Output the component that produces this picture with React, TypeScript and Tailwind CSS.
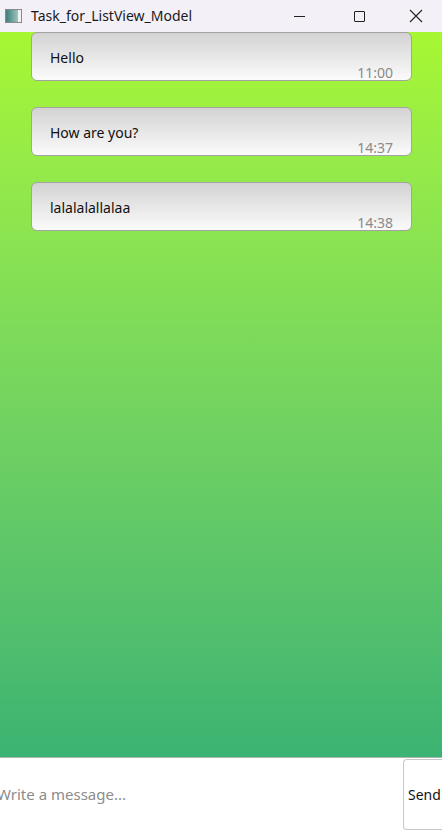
import React from "react";

const msgs = [
  { text: "Hello", time: "11:00" },
  { text: "How are you?", time: "14:37" },
  { text: "lalalalallalaa", time: "14:38" },
];

export default function App() {
  return (
    <div
      className="w-[442px] h-[830px] flex flex-col overflow-hidden bg-white"
      style={{ fontFamily: '"Noto Sans", "Open Sans", sans-serif' }}
    >
      {/* title bar */}
      <div className="h-[32px] shrink-0 bg-[#f3f0f8] flex items-center">
        <div className="ml-[5px] w-[17px] h-[14px] border border-[#8a8a8a] bg-gradient-to-r from-[#3d7f7a] to-[#b8d4d0] flex justify-end">
          <div className="w-[3px] h-full bg-[#f2f2f2]" />
        </div>
        <span className="ml-[9px] text-[14px] text-[#1a1a1a] leading-none">Task_for_ListView_Model</span>
        <div className="ml-auto flex items-center h-full">
          <div className="w-[46px] h-full flex items-center justify-center pr-[4px]">
            <div className="w-[11px] h-[1px] bg-[#222]" />
          </div>
          <div className="w-[70px] h-full flex items-center justify-center">
            <div className="w-[11px] h-[11px] border border-[#222] rounded-[1px]" />
          </div>
          <div className="w-[48px] h-full flex items-center justify-center pr-[4px]">
            <svg width="14" height="14" viewBox="0 0 14 14">
              <path d="M1 1 L13 13 M13 1 L1 13" stroke="#222" strokeWidth="1.1" />
            </svg>
          </div>
        </div>
      </div>

      {/* list */}
      <div className="flex-1 bg-gradient-to-b from-[#a7f731] to-[#3bb372] pl-[31px] flex flex-col gap-[26px]">
        {msgs.map((m) => (
          <div
            key={m.time}
            className="relative w-[381px] h-[49px] rounded-[6px] border border-[#a3a3a3] bg-gradient-to-b from-[#d3d3d3] to-[#fbfbfb]"
          >
            <div className="pl-[18px] pt-[16px] text-[14px] text-[#111] leading-[18px]">{m.text}</div>
            <div className="absolute right-[18px] bottom-[-2px] text-[14px] text-[#8a8a8a] leading-[18px]">
              {m.time}
            </div>
          </div>
        ))}
      </div>

      {/* input bar */}
      <div className="h-[73px] shrink-0 border-t border-[#a8b8ae] bg-white flex">
        <div className="flex-1 flex items-center">
          <span className="ml-[-3px] text-[15px] text-[#8c8c8c]">Write a message...</span>
        </div>
        <div className="w-[39px] mt-[1px] border border-[#c8c8c8] rounded-tl-[4px] rounded-bl-[4px] border-r-0 flex items-center pl-[4px] text-[14px] text-[#111]">
          Send
        </div>
      </div>
    </div>
  );
}
